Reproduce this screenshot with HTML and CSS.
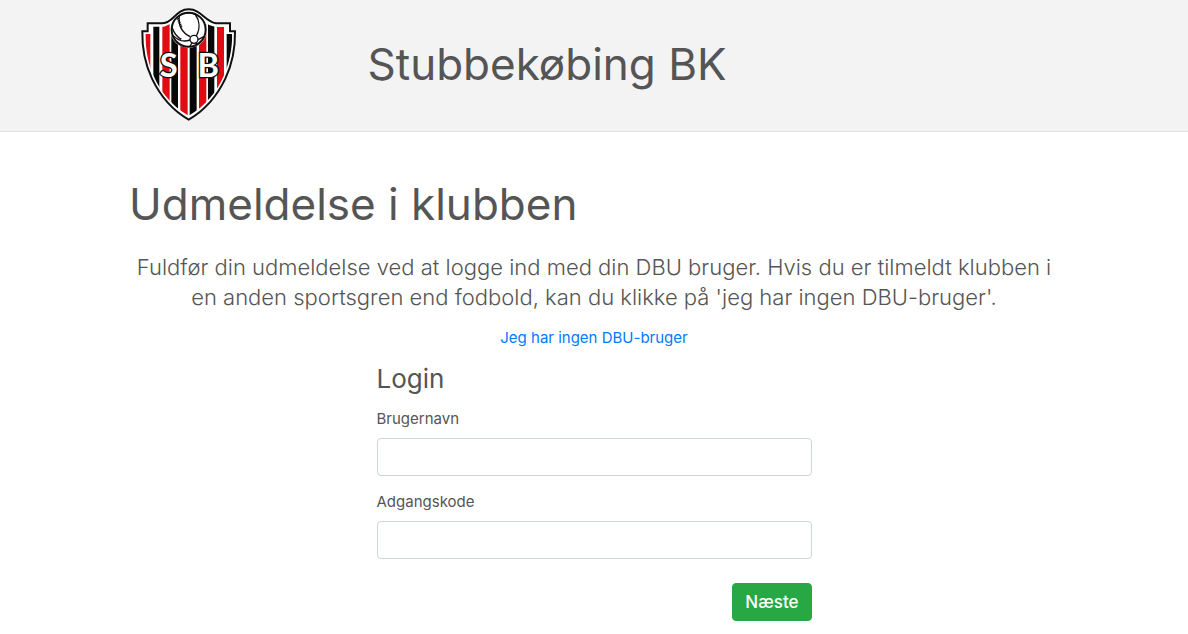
FILE: index.html
```
<!DOCTYPE html>
<html lang="da">
<head>
	<meta charset="utf-8">
	<meta name="viewport" content="width=device-width, initial-scale=1">
	<title>Stubbekøbing BK</title>
	<link rel="stylesheet" href="styles.css">
</head>
<body>

<header class="header">
	<div class="container header-row">
		<div class="logo">
			<svg class="logo-img" viewBox="0 0 318 366" aria-hidden="true">
				<defs>
					<clipPath id="shield">
						<path d="M43 68H84C96 64 104 60 114 52H204C214 62 224 66 240 69H274V90H289C288 138 280 178 263 216C243 262 210 305 158 335C106 305 73 262 53 216C36 178 29 138 28 90H43Z"/>
					</clipPath>
				</defs>
				<path d="M35 58H80C112 56 120 16 158 16C196 16 206 52 240 58H282V82H297C298 134 288 182 268 224C244 274 212 316 158 347C104 316 72 274 48 224C28 182 18 134 19 82H35Z" fill="#fff" stroke="#111" stroke-width="6"/>
				<g clip-path="url(#shield)">
					<path d="M26 90H43V230H26ZM79 60H101V320H79ZM133 60H155V345H133ZM189 60H211V330H189ZM243 60H264V280H243Z" fill="#e30b13"/>
					<path d="M52 60H70V270H52ZM106 60H126V330H106ZM161 60H182V345H161ZM216 60H235V310H216ZM272 90H290V240H272Z" fill="#080808"/>
				</g>
				<circle cx="158" cy="77" r="55" fill="#fff"/>
				<circle cx="158" cy="77" r="51" fill="#fff" stroke="#111" stroke-width="6"/>
				<g fill="none" stroke="#111" stroke-width="4">
					<circle cx="174" cy="106" r="12"/>
					<path d="M163 98C142 88 126 68 130 36M181 96C194 73 190 48 177 30M162 108C140 116 124 108 111 94M186 107L205 97M179 117L185 122M168 117L161 128M109 72C114 88 124 99 136 106M144 29C156 25 170 26 181 33"/>
					<path d="M125 43L137 71" stroke-width="7" stroke-dasharray="4 2"/>
				</g>
				<g class="logo-letters">
					<text x="98" y="219">S</text>
					<text x="217" y="219">B</text>
				</g>
			</svg>
		</div>
		<h1 class="title">Stubbekøbing BK</h1>
	</div>
</header>

<main class="container content">
	<h1 class="title">Udmeldelse i klubben</h1>
	<p class="lead">Fuldfør din udmeldelse ved at logge ind med din DBU bruger. Hvis du er tilmeldt klubben i en anden sportsgren end fodbold, kan du klikke på 'jeg har ingen DBU-bruger'.</p>
	<a class="link" href="#">Jeg har ingen DBU-bruger</a>

	<form class="login">
		<h2 class="login-title">Login</h2>
		<div class="form-group">
			<label for="brugernavn">Brugernavn</label>
			<input type="text" id="brugernavn" name="brugernavn">
		</div>
		<div class="form-group">
			<label for="adgangskode">Adgangskode</label>
			<input type="password" id="adgangskode" name="adgangskode">
		</div>
		<button class="btn" type="submit">Næste</button>
	</form>
</main>

</body>
</html>
```
FILE: styles.css
```
* {
	box-sizing: border-box;
}

body {
	margin: 0;
	font-family: Inter, "Open Sans", sans-serif;
	font-size: 15px;
	line-height: 24px;
	color: #555;
	background-color: #fff;
}

.container {
	max-width: 960px;
	margin: 0 auto;
	padding: 0 15px;
}

.header {
	background-color: #f3f3f3;
	border-bottom: 1px solid #dee2e6;
}

.header-row {
	display: grid;
	grid-template-columns: 1fr 3fr;
	column-gap: 8px;
	align-items: center;
}

.header-row .title {
	padding-bottom: 4px;
}

.logo {
	padding: 4px 7px 5px;
}

.logo-img {
	display: block;
	width: 106px;
}

.logo-letters {
	font-family: Lato, sans-serif;
	font-size: 98px;
	font-weight: bold;
	text-anchor: middle;
	fill: #fff;
	stroke: #111;
	stroke-width: 8px;
	paint-order: stroke;
}

.title {
	margin: 0;
	font-size: 44px;
	font-weight: 400;
	line-height: 48px;
}

.content {
	padding-top: 48px;
	padding-bottom: 12px;
	display: flex;
	flex-direction: column;
}

.lead {
	margin: 24px 0 14px;
	font-size: 22px;
	font-weight: 300;
	line-height: 30px;
	text-align: center;
}

.link {
	align-self: center;
	color: #007bff;
	text-decoration: none;
}

.link:hover {
	text-decoration: underline;
}

.login {
	width: 100%;
	max-width: 435px;
	margin: 14px auto 0;
	display: flex;
	flex-direction: column;
}

.login-title {
	margin: 0 0 14px;
	font-size: 26px;
	font-weight: 400;
	line-height: 29px;
}

.form-group {
	display: flex;
	flex-direction: column;
	gap: 7px;
	margin-bottom: 14px;
}

.form-group input {
	width: 100%;
	height: 38px;
	padding: 6px 12px;
	font: inherit;
	color: #495057;
	background-color: #fff;
	border: 1px solid #ced4da;
	border-radius: 4px;
}

.btn {
	align-self: flex-end;
	margin-top: 10px;
	padding: 6px 12px;
	font-family: inherit;
	font-size: 17px;
	font-weight: 500;
	line-height: 24px;
	color: #fff;
	background-color: #28a745;
	border: 1px solid #28a745;
	border-radius: 4px;
}
```
